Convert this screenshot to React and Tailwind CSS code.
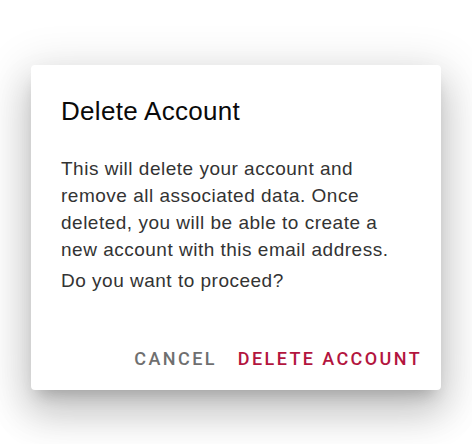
export default function App() {
  return (
    <div className="w-[472px] h-[444px] bg-white overflow-hidden" style={{ fontFamily: '"Liberation Sans", Arial, sans-serif' }}>
      <div className="pt-[65px] pl-[31px]">
        <div className="w-[410px] bg-white rounded-[4px] flex flex-col shadow-[0_11px_15px_-7px_rgba(0,0,0,0.2),0_24px_38px_3px_rgba(0,0,0,0.14),0_9px_46px_8px_rgba(0,0,0,0.12)]">
          <div className="px-[30px] pt-[31px]">
            <h2 className="text-[26px] leading-[30px] tracking-[0.3px] text-[#0a0a0a]">Delete Account</h2>
            <div className="mt-[29px] text-[19px] leading-[27px] tracking-[0.5px] text-[#333333]">
              <p>This will delete your account and remove all associated data. Once deleted, you will be able to create a new account with this email address.</p>
              <p className="mt-[4px]">Do you want to proceed?</p>
            </div>
          </div>
          <div className="mt-[55px] pb-[21px] pr-[19px] flex justify-end gap-[21px] text-[18px] leading-[20px] tracking-[2.4px] font-medium font-[Roboto,sans-serif]">
            <button className="text-[#6f6f6f] uppercase">Cancel</button>
            <button className="text-[#b3153e] uppercase">Delete Account</button>
          </div>
        </div>
      </div>
    </div>
  );
}
